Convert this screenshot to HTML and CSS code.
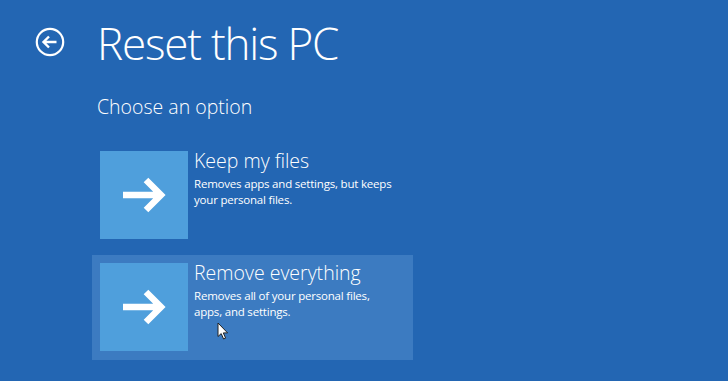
FILE: index.html
```html
<!DOCTYPE html>
<html>
<head>
<title>Reset this PC</title>
<link rel="stylesheet" href="styles.css">
</head>
<body>

<div class="header">
	<button class="back" aria-label="Back">
		<svg width="30" height="30" viewBox="0 0 30 30">
			<circle cx="15" cy="15" r="13.2" fill="none" stroke="#fff" stroke-width="2.2"/>
			<path d="M8.5 15 H21.5 M14 9.5 L8.5 15 L14 20.5" fill="none" stroke="#fff" stroke-width="2.4" stroke-linejoin="miter"/>
		</svg>
	</button>
	<h1>Reset this PC</h1>
</div>

<h2>Choose an option</h2>

<div class="options">
	<div class="option">
		<div class="tile">
			<svg width="44" height="36" viewBox="0 0 44 36">
				<path d="M1 18 H39 M24 3 L39 18 L24 33" fill="none" stroke="#fff" stroke-width="6.5" stroke-linejoin="miter"/>
			</svg>
		</div>
		<div class="text">
			<h3>Keep my files</h3>
			<p>Removes apps and settings, but keeps<br>your personal files.</p>
		</div>
	</div>

	<div class="option hover">
		<div class="tile">
			<svg width="44" height="36" viewBox="0 0 44 36">
				<path d="M1 18 H39 M24 3 L39 18 L24 33" fill="none" stroke="#fff" stroke-width="6.5" stroke-linejoin="miter"/>
			</svg>
		</div>
		<div class="text">
			<h3>Remove everything</h3>
			<p>Removes all of your personal files,<br>apps, and settings.</p>
		</div>
		<svg class="cursor" width="12" height="18" viewBox="0 0 12 18">
			<path d="M1 1 V14.5 L4.2 11.6 L6.6 17 L8.6 16.1 L6.3 10.9 H10.6 Z" fill="#fff" stroke="#222" stroke-width="1"/>
		</svg>
	</div>
</div>

</body>
</html>
```

FILE: styles.css
```css
html, body {
	margin: 0;
	height: 100%;
	background-color: #2366b3;
	color: #fff;
	font-family: 'Open Sans', 'Noto Sans', 'Liberation Sans', sans-serif;
	overflow: hidden;
}

.header {
	display: flex;
	align-items: center;
	padding: 12px 0 0 35px;
}

button.back {
	display: flex;
	padding: 0;
	border: none;
	background: none;
	margin: -2px 32px 0 0;
}

h1 {
	margin: 0;
	font-size: 44px;
	font-weight: 300;
	line-height: 62px;
	letter-spacing: -1.2px;
}

h2 {
	margin: 20px 0 0 97px;
	font-size: 19.5px;
	font-weight: 300;
	line-height: 26px;
}

.options {
	display: flex;
	flex-direction: column;
	gap: 7px;
	margin: 23px 0 0 92px;
}

.option {
	position: relative;
	display: flex;
	gap: 6px;
	width: 305px;
	padding: 8px;
	height: 89px;
}

.option.hover {
	background-color: #3c7bc1;
}

.tile {
	display: flex;
	flex: none;
	align-items: center;
	justify-content: center;
	width: 88px;
	height: 88px;
	background-color: #4f9fdc;
}

.text h3 {
	margin: -3px 0 0;
	font-size: 19.5px;
	font-weight: 300;
	line-height: 26px;
}

.text p {
	margin: 2px 0 0;
	font-size: 11.5px;
	line-height: 16px;
	letter-spacing: -0.2px;
}

.cursor {
	position: absolute;
	left: 125px;
	top: 67px;
}
```
